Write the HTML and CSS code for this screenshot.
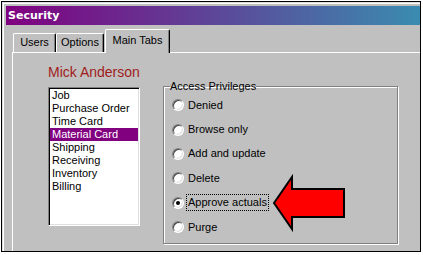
FILE: index.html
```html
<!DOCTYPE html>
<html lang="en">

<head>
  <meta charset="UTF-8" />
  <meta name="viewport" content="width=device-width, initial-scale=1.0" />
  <title>Security</title>
  <link rel="stylesheet" href="styles.css">
</head>

<body>
  <div class="frame">
    <div class="titlebar">Security</div>

    <div class="tabs">
      <div class="tab tab-users">Users</div>
      <div class="tab tab-options">Options</div>
      <div class="tab tab-main active">Main Tabs</div>
    </div>

    <section class="panel">
      <div class="user-col">
        <div class="user-name">Mick Anderson</div>
        <ul class="listbox">
          <li>Job</li>
          <li>Purchase Order</li>
          <li>Time Card</li>
          <li class="selected">Material Card</li>
          <li>Shipping</li>
          <li>Receiving</li>
          <li>Inventory</li>
          <li>Billing</li>
        </ul>
      </div>

      <fieldset class="group">
        <legend>Access Privileges</legend>
        <div class="option"><span class="radio"></span><span class="label">Denied</span></div>
        <div class="option"><span class="radio"></span><span class="label">Browse only</span></div>
        <div class="option"><span class="radio"></span><span class="label">Add and update</span></div>
        <div class="option"><span class="radio"></span><span class="label">Delete</span></div>
        <div class="option"><span class="radio checked"></span><span class="label focus">Approve actuals</span></div>
        <div class="option"><span class="radio"></span><span class="label">Purge</span></div>
      </fieldset>
    </section>
  </div>

  <!-- red callout arrow drawn over the dialog -->
  <svg class="arrow" width="80" height="62" viewBox="0 0 80 62">
    <polygon points="4,31 22,5 22,17 74,17 74,45 22,45 22,57" fill="#ff0000" stroke="#000000" stroke-width="2" stroke-linejoin="miter" />
  </svg>
</body>

</html>
```

FILE: styles.css
```css
* {
  box-sizing: border-box;
}

body {
  margin: 0;
  padding: 0;
  background-color: #ffffff;
  font-family: "Liberation Sans", Arial, sans-serif;
  font-size: 11px;
  color: #000000;
}

.frame {
  display: flex;
  flex-direction: column;
  margin: 1px 0 0 1px;
  width: 420px;
  height: 251px;
  padding: 4px 0 0 4px;
  border: 1px solid #000000;
  background-color: #c0c0c0;
  box-shadow: inset 1px 1px 0 #dfdfdf, inset 2px 2px 0 #ffffff;
  overflow: hidden;
}

.titlebar {
  flex: none;
  height: 19px;
  padding-left: 2px;
  line-height: 19px;
  font-family: "DejaVu Sans", sans-serif;
  font-weight: bold;
  font-size: 11px;
  color: #ffffff;
  background: linear-gradient(to right, #800080, #3a8cb0);
}

.tabs {
  flex: none;
  display: flex;
  align-items: flex-end;
  height: 27px;
  padding-left: 7px;
}

.tab {
  height: 19px;
  line-height: 17px;
  text-align: center;
  border-top: 1px solid #ffffff;
  border-left: 1px solid #ffffff;
  border-right: 1px solid #000000;
  border-radius: 2px 2px 0 0;
  box-shadow: inset -1px 0 0 #808080;
  background-color: #c0c0c0;
}

.tab-users {
  width: 43px;
}

.tab-options {
  width: 48px;
}

.tab-main {
  width: 65px;
  margin-left: 1px;
}

.tab.active {
  position: relative;
  z-index: 1;
  height: 24px;
  margin-bottom: -1px;
  padding-top: 2px;
}

.panel {
  flex: 1;
  display: flex;
  align-items: flex-start;
  width: 600px;
  margin-left: 6px;
  padding: 11px 0 0 35px;
  border-top: 1px solid #ffffff;
  border-left: 1px solid #ffffff;
}

.user-col {
  display: flex;
  flex-direction: column;
}

.user-name {
  height: 16px;
  line-height: 16px;
  font-size: 14px;
  color: #a01c1c;
}

.listbox {
  width: 92px;
  height: 139px;
  margin: 7px 0 0 0;
  padding: 1px;
  list-style: none;
  background-color: #ffffff;
  border: 1px solid;
  border-color: #808080 #ffffff #ffffff #808080;
  box-shadow: inset 1px 1px 0 #000000, inset -1px -1px 0 #dfdfdf;
}

.listbox li {
  height: 13px;
  line-height: 13px;
  padding-left: 2px;
  white-space: nowrap;
}

.listbox li.selected {
  background-color: #800080;
  color: #ffffff;
}

.group {
  width: 235px;
  height: 164px;
  margin: 16px 0 0 23px;
  padding: 0 0 0 8px;
  border: 1px solid #808080;
  box-shadow: inset 1px 1px 0 #ffffff, 1px 1px 0 #ffffff;
}

.group legend {
  margin-left: -2px;
  padding: 0;
  line-height: 13px;
}

.option {
  display: flex;
  align-items: center;
  height: 24.4px;
}

.radio {
  position: relative;
  width: 12px;
  height: 12px;
  border-radius: 50%;
  background-color: #ffffff;
  border: 1px solid;
  border-color: #808080 #ffffff #ffffff #808080;
  box-shadow: inset 1px 1px 0 #404040, inset -1px -1px 0 #dfdfdf;
}

.radio.checked::after {
  content: "";
  position: absolute;
  left: 3px;
  top: 3px;
  width: 4px;
  height: 4px;
  border-radius: 50%;
  background-color: #000000;
}

.label {
  margin-left: 2px;
  padding: 0 1px;
  line-height: 15px;
  border: 1px solid transparent;
}

.label.focus {
  border: 1px dotted #000000;
}

.arrow {
  position: absolute;
  left: 270px;
  top: 172px;
}
```
